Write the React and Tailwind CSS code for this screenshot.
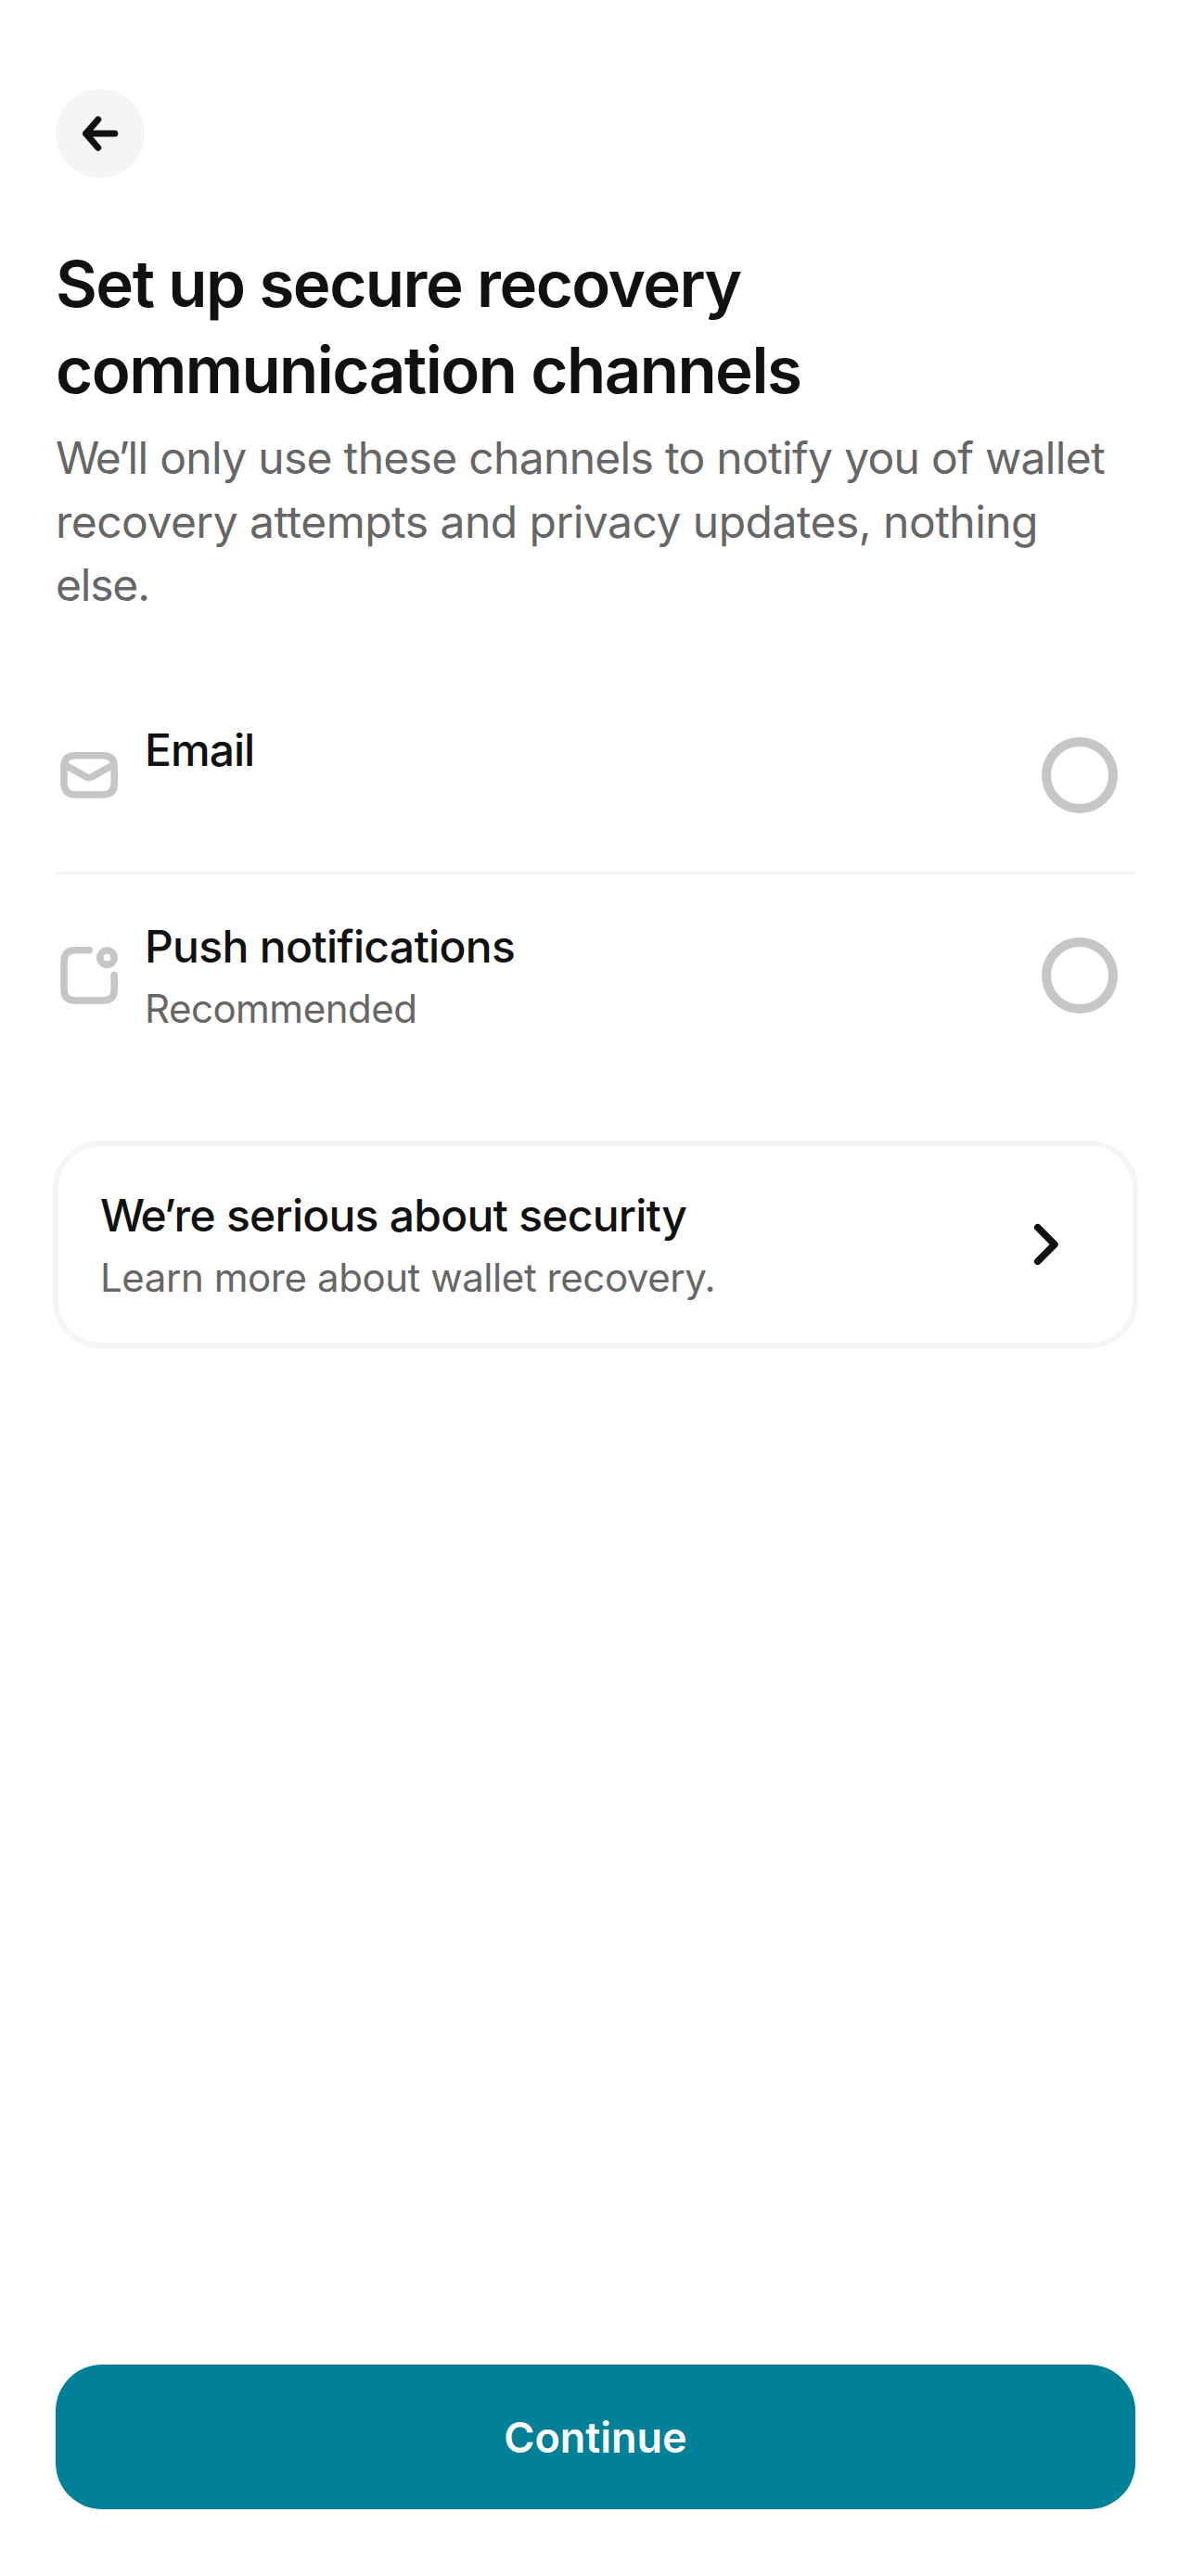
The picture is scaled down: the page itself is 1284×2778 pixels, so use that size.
import React from 'react';

function Radio() {
  return <span className="mr-[19px] size-[82px] shrink-0 rounded-full border-[10px] border-[#c6c6c6]" />;
}

export default function App() {
  return (
    <main className="flex h-[2778px] w-[1284px] flex-col bg-white px-[60px] pt-[96px] pb-[72px] font-['Inter',sans-serif] text-[#111111]">
      <button aria-label="Back" className="flex size-[96px] items-center justify-center rounded-full bg-[#f5f5f5]">
        <svg className="size-[48px]" viewBox="0 0 48 48" fill="none" stroke="currentColor" strokeWidth="7" strokeLinecap="round" strokeLinejoin="round">
          <path d="M39.8 24H8.5M21.7 9L8.5 24L21.7 39.3" />
        </svg>
      </button>
      <h1 className="mt-[68px] text-[69px] leading-[93px] font-semibold tracking-[-1.52px] whitespace-nowrap">
        Set up secure recovery<br />communication channels
      </h1>
      <p className="mt-[14px] text-[48px] leading-[68.5px] whitespace-nowrap text-[#666666]">
        <span className="block tracking-[-0.7px]"><span className="tracking-[-2.2px]">We’</span>ll only use these channels to notify you of wallet</span>
        <span className="block tracking-[-0.53px]">recovery attempts and privacy updates, nothing</span>
        <span className="block tracking-[-1.2px]">else.</span>
      </p>
      <section className="mt-[66.5px]">
        <div className="flex h-[211px] items-center border-b-[3px] border-[#f5f5f5]">
          <svg className="mr-[24px] size-[72px]" viewBox="0 0 72 72" fill="none" stroke="#c6c6c6" strokeWidth="7.6" strokeLinecap="round" strokeLinejoin="round">
            <path d="M21 14.8H51Q63.2 14.8 63.2 27V44.8Q63.2 57 51 57H21Q9 57 9 44.8V27Q9 14.8 21 14.8Z" />
            <path d="M10 25L33 37.8Q36 39.5 39 37.8L62 25" />
          </svg>
          <div className="h-[127px] flex-1 text-[48px] leading-[72px] font-medium tracking-[-0.97px]">Email</div>
          <Radio />
        </div>
        <div className="flex h-[218px] items-center">
          <svg className="mr-[24px] size-[72px]" viewBox="0 0 72 72" fill="none" stroke="#c6c6c6" strokeWidth="7.6" strokeLinecap="round" strokeLinejoin="round">
            <path d="M36.2 8.8H21Q9 8.8 9 20.8V51Q9 63 21 63H51Q63.2 63 63.2 51V35.6" />
            <circle cx="55.5" cy="16.7" r="7.65" />
          </svg>
          <div className="flex-1 pb-[2px]">
            <div className="text-[48px] leading-[72px] font-medium tracking-[-0.69px]">Push notifications</div>
            <div className="mt-px text-[42px] leading-[60px] tracking-[-0.5px] text-[#666666]">Recommended</div>
          </div>
          <Radio />
        </div>
      </section>
      <section className="-mx-[3px] mt-[69px] flex h-[224px] items-center rounded-[52px] border-[6px] border-[#f5f5f5] pr-[69px] pl-[45px]">
        <div className="flex-1 pb-[2px]">
          <div className="text-[48px] leading-[72px] font-medium tracking-[-0.75px]"><span className="tracking-[-2.2px]">We’</span>re serious about security</div>
          <div className="mt-px text-[42px] leading-[60px] tracking-[-0.43px] text-[#666666]">Learn more about wallet recovery.</div>
        </div>
        <svg className="size-[48px]" viewBox="0 0 48 48" fill="none" stroke="currentColor" strokeWidth="7.5" strokeLinecap="round" strokeLinejoin="round">
          <path d="M14.7 5.7L32.9 24L14.7 42.3" />
        </svg>
      </section>
      <button className="mt-auto h-[156px] rounded-[50px] bg-[#008198] pt-[2px] text-[45px] font-semibold text-white">Continue</button>
    </main>
  );
}
